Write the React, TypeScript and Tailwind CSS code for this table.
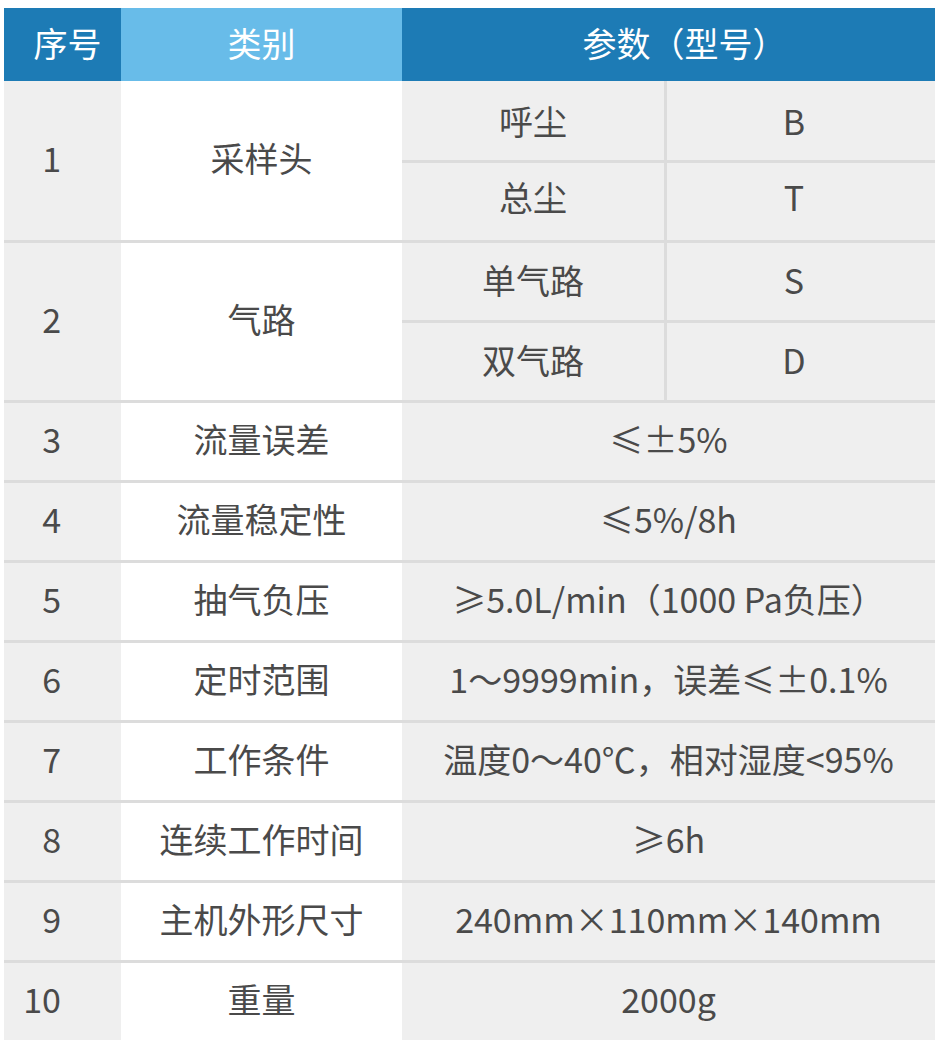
import React from "react";

const font = "font-['Noto_Sans_CJK_SC','Noto_Sans',sans-serif]";

function SimpleRow({ n, name, value, last }: { n: string; name: string; value: string; last?: boolean }) {
  return (
    <div className={`flex ${last ? "h-[77px]" : "h-[80px] border-b-[3px] border-[#dcdcdc]"}`}>
      <div className="w-[117px] bg-[#efefef] flex items-center justify-end pr-[60px] pb-[6px]">{n}</div>
      <div className="w-[281px] bg-white flex items-center justify-center pb-[6px]">{name}</div>
      <div className="flex-1 bg-[#efefef] flex items-center justify-center pb-[6px]">{value}</div>
    </div>
  );
}

function MergedRow({
  n,
  name,
  subs,
  topH,
  totalH,
  topPad,
  botPad,
}: {
  n: string;
  name: string;
  subs: [string, string][];
  topH: string;
  totalH: string;
  topPad: string;
  botPad: string;
}) {
  return (
    <div className={`flex ${totalH} border-b-[3px] border-[#dcdcdc]`}>
      <div className="w-[117px] bg-[#efefef] flex items-center justify-end pr-[60px] pb-[6px]">{n}</div>
      <div className="w-[281px] bg-white flex items-center justify-center pb-[6px]">{name}</div>
      <div className="flex-1 flex flex-col bg-[#efefef]">
        <div className={`flex ${topH} border-b-[3px] border-[#dcdcdc]`}>
          <div className={`w-[265px] border-r-[3px] border-[#dcdcdc] flex items-center justify-center ${topPad}`}>{subs[0][0]}</div>
          <div className={`flex-1 flex items-center justify-center pr-[14px] ${topPad}`}>{subs[0][1]}</div>
        </div>
        <div className="flex flex-1">
          <div className={`w-[265px] border-r-[3px] border-[#dcdcdc] flex items-center justify-center ${botPad}`}>{subs[1][0]}</div>
          <div className={`flex-1 flex items-center justify-center pr-[14px] ${botPad}`}>{subs[1][1]}</div>
        </div>
      </div>
    </div>
  );
}

export default function App() {
  return (
    <div className={`w-[944px] h-[1049px] bg-white pt-2 pl-1 ${font}`}>
      <div className="w-[931px] text-[34px] leading-none text-[#4a4a4a]">
        <div className="flex h-[73px] text-white">
          <div className="w-[117px] bg-[#1d7bb5] flex items-center justify-center pl-[10px] pb-[4px]">序号</div>
          <div className="w-[281px] bg-[#68bce9] flex items-center justify-center pb-[4px]">类别</div>
          <div className="flex-1 bg-[#1d7bb5] flex items-center justify-center pl-[32px] pb-[4px]">参数（型号）</div>
        </div>
        <MergedRow
          n="1"
          name="采样头"
          subs={[["呼尘", "B"], ["总尘", "T"]]}
          topH="h-[82px]"
          totalH="h-[162px]"
          topPad="pb-[0px]"
          botPad="pb-[9px]"
        />
        <MergedRow
          n="2"
          name="气路"
          subs={[["单气路", "S"], ["双气路", "D"]]}
          topH="h-[80px]"
          totalH="h-[160px]"
          topPad="pb-[4px]"
          botPad="pb-[4px]"
        />
        <SimpleRow n="3" name="流量误差" value="≤±5%" />
        <SimpleRow n="4" name="流量稳定性" value="≤5%/8h" />
        <SimpleRow n="5" name="抽气负压" value="≥5.0L/min（1000 Pa负压）" />
        <SimpleRow n="6" name="定时范围" value="1～9999min，误差≤±0.1%" />
        <SimpleRow n="7" name="工作条件" value="温度0～40℃，相对湿度<95%" />
        <SimpleRow n="8" name="连续工作时间" value="≥6h" />
        <SimpleRow n="9" name="主机外形尺寸" value="240mm×110mm×140mm" />
        <SimpleRow n="10" name="重量" value="2000g" last />
      </div>
    </div>
  );
}
